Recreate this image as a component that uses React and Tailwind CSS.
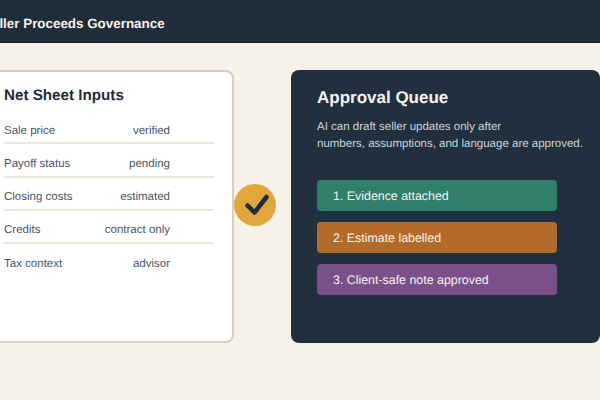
export default function App() {
  const rows = [
    ["Sale price", "verified"],
    ["Payoff status", "pending"],
    ["Closing costs", "estimated"],
    ["Credits", "contract only"],
    ["Tax context", "advisor"],
  ];
  const steps = [
    ["1. Evidence attached", "bg-[#2f7f6b]"],
    ["2. Estimate labelled", "bg-[#b36b2c]"],
    ["3. Client-safe note approved", "bg-[#7b4f8a]"],
  ];
  return (
    <div className="w-[600px] h-[400px] overflow-hidden bg-[#f6f1ea] font-['Liberation_Sans',Arial,sans-serif] [text-rendering:geometricPrecision]">
      <header className="h-[43px] bg-[#1f2d3a] border-b border-[#16202a] flex items-center">
        <h1 className="ml-[-17px] pt-[6px] whitespace-nowrap text-[13.4px] font-bold text-[#f6f1ea]">Seller Proceeds Governance</h1>
      </header>
      <main className="mt-[27px] ml-[-20px] flex w-[620px] items-stretch">
        <section className="w-[254px] h-[273px] shrink-0 rounded-[8px] border-[2px] border-[#d6cebe] bg-white pl-[22px] pr-[18px] pt-[14px]">
          <h2 className="text-[15.2px] leading-[20px] font-bold text-[#1f2d3a]">Net Sheet Inputs</h2>
          <div className="mt-[5px]">
            {rows.map(([a, b], i) => (
              <div key={a} className={`h-[33.3px] pr-[44px] pt-[9px] flex justify-between items-center text-[11.5px] text-[#4a5563] border-b-[2px] ${i < 4 ? "border-[#ece6dc]" : "border-transparent"}`}>
                <span>{a}</span>
                <span>{b}</span>
              </div>
            ))}
          </div>
        </section>
        <div className="mr-[15px] mb-[3px] w-[42px] h-[42px] shrink-0 self-center rounded-full bg-[#e0a83c] flex items-center justify-center">
          <svg width="42" height="42" viewBox="0 0 42 42" fill="none" stroke="#1f2d3a" strokeWidth="4.5" strokeLinecap="round" strokeLinejoin="round">
            <path d="M13.5 21.5 L20.5 28.5 L32.5 13" />
          </svg>
        </div>
        <section className="w-[309px] h-[273px] shrink-0 rounded-[8px] bg-[#20303e] pl-[26px] pt-[17px]">
          <h2 className="text-[17px] leading-[22px] font-bold text-[#f6f1ea]">Approval Queue</h2>
          <p className="mt-[10px] text-[11.5px] leading-[17px] text-[#cbd5d8] whitespace-nowrap">
            AI can draft seller updates only after<br />numbers, assumptions, and language are approved.
          </p>
          <div className="mt-[27px] flex flex-col gap-[11px] w-[240px]">
            {steps.map(([t, c]) => (
              <div key={t} className={`h-[31px] rounded-[4px] pl-[16px] pt-[1px] flex items-center text-[12.4px] text-[#f6f1ea] ${c}`}>{t}</div>
            ))}
          </div>
        </section>
      </main>
    </div>
  );
}
